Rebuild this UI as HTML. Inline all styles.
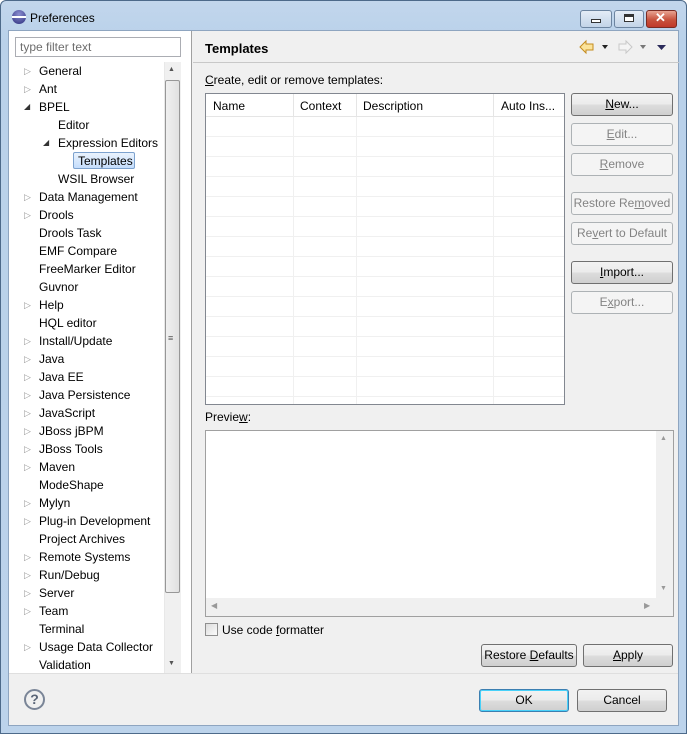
<!DOCTYPE html>
<html><head><style>
*{box-sizing:border-box;margin:0;padding:0}
body{width:687px;height:734px;overflow:hidden;font-family:"Liberation Sans",sans-serif;font-size:12px;color:#000;background:#fff}
.a{position:absolute}
.win{left:0;top:0;width:687px;height:734px;background:linear-gradient(#c2d6ec,#b9d1ea 40px,#bcd3eb);border:1px solid #4d6a8a;border-radius:6px 6px 0 0}
.client{left:8px;top:30px;width:671px;height:696px;background:#f0f0f0;border:1px solid #8ea5c0}
.btn{position:absolute;height:23px;border:1px solid #707070;border-radius:3px;background:linear-gradient(#f2f2f2 0,#ebebeb 50%,#dddddd 51%,#cfcfcf);text-align:center;line-height:21px;font-size:12px}
.dis{border-color:#adb2b5;background:#f4f4f4;color:#838383}
.tr{position:absolute;left:0;height:18px;line-height:18px;white-space:nowrap}
.arr{position:absolute;width:0;height:0;border-top:4px solid transparent;border-bottom:4px solid transparent;border-left:5px solid #fff}
u{text-decoration:underline}
</style></head><body>
<div class="a win"></div>
<!-- title -->
<div class="a" style="left:12px;top:10px;width:14px;height:14px;border-radius:50%;background:radial-gradient(circle at 50% 30%,#8b8ed0,#2c2f7e)"></div>
<div class="a" style="left:12px;top:16px;width:14px;height:2px;background:#fff"></div>
<div class="a" style="left:30px;top:11px;font-size:12px">Preferences</div>
<div class="a" style="left:580px;top:10px;width:32px;height:18px;border:1px solid #6c84a0;border-radius:3px;background:linear-gradient(#e4ecf6,#c3d4e8)"></div>
<div class="a" style="left:591px;top:19px;width:10px;height:4px;border:1px solid #333;background:#fff"></div>
<div class="a" style="left:614px;top:10px;width:30px;height:18px;border:1px solid #6c84a0;border-radius:3px;background:linear-gradient(#e4ecf6,#c3d4e8)"></div>
<div class="a" style="left:624px;top:14px;width:10px;height:8px;border:1px solid #333;border-top-width:3px;background:#fff"></div>
<div class="a" style="left:646px;top:10px;width:31px;height:18px;border:1px solid #7a2b23;border-radius:3px;background:linear-gradient(#e8a493,#c8523d 55%,#c0392a)"></div>
<div class="a" style="left:655px;top:10px;color:#fff;font-weight:bold;font-size:13px">✕</div>

<div class="a client"></div>
<!-- left panel -->
<div class="a" style="left:9px;top:31px;width:182px;height:642px;background:#fff"></div>
<div class="a" style="left:191px;top:31px;width:1px;height:642px;background:#a0a0a0"></div>
<div class="a" style="left:15px;top:37px;width:166px;height:20px;border:1px solid #abadb3;background:#fff;color:#6d6d6d;padding-left:4px;line-height:18px">type filter text</div>
<!-- tree scrollbar -->
<div class="a" style="left:164px;top:62px;width:17px;height:611px;background:#f0f0f0;border-left:1px solid #e8e8e8"></div>
<div class="a" style="left:165px;top:80px;width:15px;height:513px;border:1px solid #979797;border-radius:2px;background:linear-gradient(90deg,#f0f0f0,#e0e0e0)"></div>
<div class="a" style="left:168px;top:333px;font-size:9px;color:#555">≡</div>
<div class="a" style="left:168px;top:66px;font-size:7px;color:#555">▲</div>
<div class="a" style="left:168px;top:660px;font-size:7px;color:#555">▼</div>
<div class="a" style="left:73px;top:152px;width:62px;height:17px;border:1px solid #7da2ce;border-radius:2px;background:linear-gradient(#eaf3fd,#c4ddfc)"></div>
<div class="a" style="left:9px;top:62px;width:155px">
<div class="tr" style="top:0"><span style="position:absolute;left:15px;color:#999;font-size:9px">▷</span><span style="position:absolute;left:30px">General</span></div>
<div class="tr" style="top:18px"><span style="position:absolute;left:15px;color:#999;font-size:9px">▷</span><span style="position:absolute;left:30px">Ant</span></div>
<div class="tr" style="top:36px"><span style="position:absolute;left:15px;color:#333;font-size:8px">◢</span><span style="position:absolute;left:30px">BPEL</span></div>
<div class="tr" style="top:54px"><span style="position:absolute;left:49px">Editor</span></div>
<div class="tr" style="top:72px"><span style="position:absolute;left:34px;color:#333;font-size:8px">◢</span><span style="position:absolute;left:49px">Expression Editors</span></div>
<div class="tr" style="top:90px"><span style="position:absolute;left:69px">Templates</span></div>
<div class="tr" style="top:108px"><span style="position:absolute;left:49px">WSIL Browser</span></div>
</div>
<div class="a" style="left:9px;top:188px;width:155px">
<div class="tr" style="top:0"><span style="position:absolute;left:15px;color:#999;font-size:9px">▷</span><span style="position:absolute;left:30px">Data Management</span></div>
<div class="tr" style="top:18px"><span style="position:absolute;left:15px;color:#999;font-size:9px">▷</span><span style="position:absolute;left:30px">Drools</span></div>
<div class="tr" style="top:36px"><span style="position:absolute;left:30px">Drools Task</span></div>
<div class="tr" style="top:54px"><span style="position:absolute;left:30px">EMF Compare</span></div>
<div class="tr" style="top:72px"><span style="position:absolute;left:30px">FreeMarker Editor</span></div>
<div class="tr" style="top:90px"><span style="position:absolute;left:30px">Guvnor</span></div>
<div class="tr" style="top:108px"><span style="position:absolute;left:15px;color:#999;font-size:9px">▷</span><span style="position:absolute;left:30px">Help</span></div>
<div class="tr" style="top:126px"><span style="position:absolute;left:30px">HQL editor</span></div>
<div class="tr" style="top:144px"><span style="position:absolute;left:15px;color:#999;font-size:9px">▷</span><span style="position:absolute;left:30px">Install/Update</span></div>
<div class="tr" style="top:162px"><span style="position:absolute;left:15px;color:#999;font-size:9px">▷</span><span style="position:absolute;left:30px">Java</span></div>
<div class="tr" style="top:180px"><span style="position:absolute;left:15px;color:#999;font-size:9px">▷</span><span style="position:absolute;left:30px">Java EE</span></div>
<div class="tr" style="top:198px"><span style="position:absolute;left:15px;color:#999;font-size:9px">▷</span><span style="position:absolute;left:30px">Java Persistence</span></div>
<div class="tr" style="top:216px"><span style="position:absolute;left:15px;color:#999;font-size:9px">▷</span><span style="position:absolute;left:30px">JavaScript</span></div>
<div class="tr" style="top:234px"><span style="position:absolute;left:15px;color:#999;font-size:9px">▷</span><span style="position:absolute;left:30px">JBoss jBPM</span></div>
<div class="tr" style="top:252px"><span style="position:absolute;left:15px;color:#999;font-size:9px">▷</span><span style="position:absolute;left:30px">JBoss Tools</span></div>
<div class="tr" style="top:270px"><span style="position:absolute;left:15px;color:#999;font-size:9px">▷</span><span style="position:absolute;left:30px">Maven</span></div>
<div class="tr" style="top:288px"><span style="position:absolute;left:30px">ModeShape</span></div>
<div class="tr" style="top:306px"><span style="position:absolute;left:15px;color:#999;font-size:9px">▷</span><span style="position:absolute;left:30px">Mylyn</span></div>
<div class="tr" style="top:324px"><span style="position:absolute;left:15px;color:#999;font-size:9px">▷</span><span style="position:absolute;left:30px">Plug-in Development</span></div>
<div class="tr" style="top:342px"><span style="position:absolute;left:30px">Project Archives</span></div>
<div class="tr" style="top:360px"><span style="position:absolute;left:15px;color:#999;font-size:9px">▷</span><span style="position:absolute;left:30px">Remote Systems</span></div>
<div class="tr" style="top:378px"><span style="position:absolute;left:15px;color:#999;font-size:9px">▷</span><span style="position:absolute;left:30px">Run/Debug</span></div>
<div class="tr" style="top:396px"><span style="position:absolute;left:15px;color:#999;font-size:9px">▷</span><span style="position:absolute;left:30px">Server</span></div>
<div class="tr" style="top:414px"><span style="position:absolute;left:15px;color:#999;font-size:9px">▷</span><span style="position:absolute;left:30px">Team</span></div>
<div class="tr" style="top:432px"><span style="position:absolute;left:30px">Terminal</span></div>
<div class="tr" style="top:450px"><span style="position:absolute;left:15px;color:#999;font-size:9px">▷</span><span style="position:absolute;left:30px">Usage Data Collector</span></div>
<div class="tr" style="top:468px"><span style="position:absolute;left:30px">Validation</span></div>
</div>

<!-- right header -->
<div class="a" style="left:205px;top:41px;font-weight:bold;font-size:13px">Templates</div>
<div class="a" style="left:193px;top:62px;width:486px;height:1px;background:#c8c8c8"></div>
<svg class="a" style="left:578px;top:38px" width="90" height="20"><path d="M2 9 L8 3 L8 6 L15 6 L15 12 L8 12 L8 15 Z" fill="#fbe39a" stroke="#c38b1e"/><path d="M24 7 L30 7 L27 11 Z" fill="#222"/><path d="M54 9 L48 3 L48 6 L41 6 L41 12 L48 12 L48 15 Z" fill="#f4f4f4" stroke="#c8c8c8"/><path d="M62 7 L68 7 L65 11 Z" fill="#777"/><path d="M79 7 L88 7 L83.5 12 Z" fill="#2a2a5a"/></svg>
<div class="a" style="left:205px;top:73px"><u>C</u>reate, edit or remove templates:</div>

<!-- table -->
<div class="a" style="left:205px;top:93px;width:360px;height:312px;border:1px solid #828790;background:#fff;overflow:hidden">
<div class="a" style="left:0;top:0;width:358px;height:23px;border-bottom:1px solid #e5e5e5"></div>
<div class="a" style="left:7px;top:5px">Name</div>
<div class="a" style="left:94px;top:5px">Context</div>
<div class="a" style="left:157px;top:5px">Description</div>
<div class="a" style="left:295px;top:5px">Auto Ins...</div>
<div class="a" style="left:87px;top:0;width:1px;height:310px;background:#e5e5e5"></div>
<div class="a" style="left:150px;top:0;width:1px;height:310px;background:#e5e5e5"></div>
<div class="a" style="left:287px;top:0;width:1px;height:310px;background:#e5e5e5"></div>
<div class="a" style="left:0;top:23px;width:358px;height:290px;background:repeating-linear-gradient(#fff 0,#fff 19px,#f0f0f0 19px,#f0f0f0 20px)"></div>
<div class="a" style="left:87px;top:23px;width:1px;height:290px;background:#f0f0f0"></div>
<div class="a" style="left:150px;top:23px;width:1px;height:290px;background:#f0f0f0"></div>
<div class="a" style="left:287px;top:23px;width:1px;height:290px;background:#f0f0f0"></div>
</div>

<div class="btn" style="left:571px;top:93px;width:102px"><u>N</u>ew...</div>
<div class="btn dis" style="left:571px;top:123px;width:102px"><u>E</u>dit...</div>
<div class="btn dis" style="left:571px;top:153px;width:102px"><u>R</u>emove</div>
<div class="btn dis" style="left:571px;top:192px;width:102px">Restore Re<u>m</u>oved</div>
<div class="btn dis" style="left:571px;top:222px;width:102px">Re<u>v</u>ert to Default</div>
<div class="btn" style="left:571px;top:261px;width:102px"><u>I</u>mport...</div>
<div class="btn dis" style="left:571px;top:291px;width:102px">E<u>x</u>port...</div>

<div class="a" style="left:205px;top:410px">Previe<u>w</u>:</div>
<div class="a" style="left:205px;top:430px;width:469px;height:187px;border:1px solid #a0a0a0;background:#fff"></div>
<div class="a" style="left:206px;top:598px;width:450px;height:18px;background:#f0f0f0"></div>
<div class="a" style="left:656px;top:431px;width:17px;height:185px;background:#f0f0f0"></div>
<div class="a" style="left:211px;top:601px;font-size:8px;color:#999">◀</div>
<div class="a" style="left:644px;top:601px;font-size:8px;color:#999">▶</div>
<div class="a" style="left:660px;top:435px;font-size:7px;color:#999">▲</div>
<div class="a" style="left:660px;top:585px;font-size:7px;color:#999">▼</div>

<div class="a" style="left:205px;top:623px;width:13px;height:13px;border:1px solid #8f8f8f;background:linear-gradient(135deg,#ddd,#fbfbfb)"></div>
<div class="a" style="left:222px;top:623px">Use code <u>f</u>ormatter</div>
<div class="btn" style="left:481px;top:644px;width:96px">Restore <u>D</u>efaults</div>
<div class="btn" style="left:583px;top:644px;width:90px"><u>A</u>pply</div>

<div class="a" style="left:9px;top:673px;width:669px;height:1px;background:#dfdfdf"></div>
<div class="a" style="left:24px;top:689px;width:21px;height:21px;border:2px solid #7a8597;border-radius:50%;text-align:center;line-height:17px;font-weight:bold;font-size:14px;color:#5a6577">?</div>
<div class="btn" style="left:479px;top:689px;width:90px;border-color:#3c7fb1;box-shadow:inset 0 0 0 1px #48d1f9">OK</div>
<div class="btn" style="left:577px;top:689px;width:90px">Cancel</div>
</body></html>
